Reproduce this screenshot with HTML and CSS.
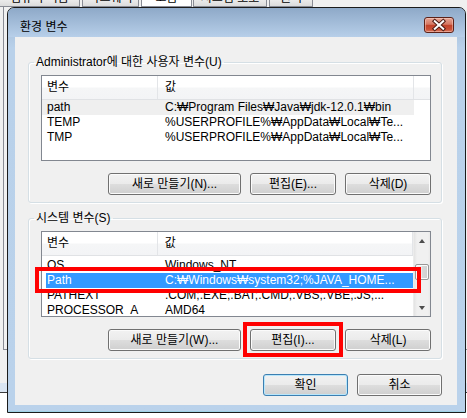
FILE: index.html
```html
<!DOCTYPE html>
<html lang="ko">
<head>
<meta charset="utf-8">
<title>환경 변수</title>
<link rel="stylesheet" href="styles.css">
</head>
<body>
<div class="parent">
  <div class="tabs">
    <div class="tab t1"><span>컴퓨터 이름</span></div>
    <div class="tab t2"><span>하드웨어</span></div>
    <div class="tab t3 sel"><span>고급</span></div>
    <div class="tab t4"><span>시스템 보호</span></div>
    <div class="tab t5"><span>원격</span></div>
  </div>
  <div class="page"></div>
</div>

<div class="dialog">
  <div class="titlebar">
    <span class="title">환경 변수</span>
    <button class="close" aria-label="닫기">
      <svg width="30" height="16" viewBox="0 0 30 16">
        <path d="M10.8 4.2 L19.2 11.8 M19.2 4.2 L10.8 11.8" stroke="#4a1a12" stroke-width="4" stroke-linecap="square" fill="none"/>
        <path d="M10.8 4.2 L19.2 11.8 M19.2 4.2 L10.8 11.8" stroke="#ffffff" stroke-width="2" stroke-linecap="square" fill="none"/>
      </svg>
    </button>
  </div>

  <div class="client">
    <fieldset class="group">
      <legend>Administrator에 대한 사용자 변수(U)</legend>
      <div class="list">
        <div class="lmain">
          <div class="lhead"><span class="h1">변수</span><span class="h2">값</span><span class="h3"></span></div>
          <div class="lbody">
            <div class="row hot"><span class="c1">path</span><span class="c2">C:₩Program Files₩Java₩jdk-12.0.1₩bin</span></div>
            <div class="row"><span class="c1">TEMP</span><span class="c2">%USERPROFILE%₩AppData₩Local₩Te...</span></div>
            <div class="row"><span class="c1">TMP</span><span class="c2">%USERPROFILE%₩AppData₩Local₩Te...</span></div>
          </div>
        </div>
      </div>
      <div class="btnrow">
        <button class="btn wide">새로 만들기(N)...</button>
        <button class="btn">편집(E)...</button>
        <button class="btn">삭제(D)</button>
      </div>
    </fieldset>

    <fieldset class="group g2">
      <legend>시스템 변수(S)</legend>
      <div class="list">
        <div class="lmain">
          <div class="lhead cover"><span class="h1">변수</span><span class="h2">값</span></div>
          <div class="lbody scrolled">
            <div class="row"><span class="c1">OS</span><span class="c2">Windows_NT</span></div>
            <div class="row sel"><span class="c1">Path</span><span class="c2">C:₩Windows₩system32;%JAVA_HOME...</span></div>
            <div class="row"><span class="c1">PATHEXT</span><span class="c2">.COM;.EXE;.BAT;.CMD;.VBS;.VBE;.JS;...</span></div>
            <div class="row"><span class="c1">PROCESSOR_A</span><span class="c2">AMD64</span></div>
          </div>
        </div>
        <div class="vscroll">
          <div class="sbtn"><span class="arrow up"></span></div>
          <div class="track"><div class="thumb"></div></div>
          <div class="sbtn"><span class="arrow down"></span></div>
        </div>
        <div class="mark-row"></div>
      </div>
      <div class="btnrow">
        <button class="btn wide">새로 만들기(W)...</button>
        <button class="btn marked">편집(I)...</button>
        <button class="btn">삭제(L)</button>
      </div>
    </fieldset>

    <div class="footer">
      <button class="btn ok">확인</button>
      <button class="btn">취소</button>
    </div>
  </div>
</div>
</body>
</html>
```

FILE: styles.css
```css
* { box-sizing: border-box; }

html, body {
  margin: 0;
  padding: 0;
}

body {
  width: 467px;
  height: 418px;
  overflow: hidden;
  position: relative;
  background: #ffffff;
  font-family: "Liberation Sans", "Noto Sans CJK KR", sans-serif;
  font-size: 12px;
  color: #000;
}

/* underlying parent window (System Properties) */
.parent {
  position: absolute;
  left: 0;
  top: 0;
  width: 467px;
  height: 393px;
  background: #f0f0f0;
  border-bottom: 1px solid #3c3c3c;
  box-shadow: inset 0 -9px 0 #dae5f2;
  overflow: hidden;
}

.tabs {
  display: flex;
  height: 7px;
}

.tab {
  height: 7px;
  overflow: hidden;
  border: 1px solid #898c95;
  border-top: none;
  background: linear-gradient(#ebebeb, #dcdcdc);
  margin-right: 2px;
  font-size: 12px;
  color: #000;
  text-align: center;
}

.tab span {
  display: block;
  line-height: 14px;
  margin-top: -9px;
  white-space: nowrap;
}

.t1 { width: 80px; border-left: none; }
.t2 { width: 57px; }
.t3 { width: 51px; margin-right: 1px; }
.t4 { width: 74px; }
.t5 { width: 44px; }
.tab.sel { background: #fff; }

.page {
  position: absolute;
  left: 3px;
  top: 7px;
  width: 464px;
  height: 343px;
  border-left: 1px solid #898c95;
  border-bottom: 1px solid #898c95;
}

/* the dialog window */
.dialog {
  position: absolute;
  left: 7px;
  top: 7px;
  width: 459px;
  height: 406px;
  border: 1px solid #1b1b1b;
  border-radius: 7px 7px 0 0;
  background: linear-gradient(#9ab3cf 0px, #b9d1ea 40px, #bad2eb 100%);
  display: flex;
  flex-direction: column;
  box-shadow: inset 0 -1px 0 #9fd0e4;
}

.titlebar {
  height: 29px;
  display: flex;
  justify-content: space-between;
  align-items: flex-start;
  padding: 0 11px 0 12px;
  border-radius: 6px 6px 0 0;
  background: linear-gradient(#8ea9c8, #b7cfe9);
}

.title {
  padding-top: 12px;
  line-height: 15px;
  font-size: 12px;
  color: #000;
  white-space: nowrap;
}

.close {
  margin-top: 9px;
  width: 30px;
  height: 16px;
  padding: 0;
  border: 1px solid #5d2218;
  border-radius: 3px;
  background: linear-gradient(#e5a595 0%, #d67863 45%, #c2432b 52%, #c94f36 80%, #d97a5f 100%);
  box-shadow: inset 0 0 0 1px rgba(255, 220, 210, 0.45);
  display: flex;
  align-items: center;
  justify-content: center;
}

.close svg { display: block; margin: -1px; }

.client {
  flex: 1;
  margin: 0 8px 7px 7px;
  background: #f0f0f0;
  display: flex;
  flex-direction: column;
}

/* group boxes */
.group {
  width: 414px;
  margin: 18px 0 0 13px;
  padding: 5px 10px 7px 12px;
  border: 1px solid #d5dfe5;
  border-radius: 3px;
  box-shadow: inset 1px 1px 0 #fff, 1px 1px 0 #fff;
  min-width: 0;
}

.group.g2 { margin-top: 8px; }

.group legend {
  padding: 0 2px;
  margin-left: -7px;
  line-height: 15px;
  font-size: 12px;
  white-space: nowrap;
}

/* list views */
.list {
  position: relative;
  height: 86px;
  border: 1px solid #828790;
  background: #fff;
  display: flex;
}

.lmain {
  flex: 1;
  display: flex;
  flex-direction: column;
  overflow: hidden;
  min-width: 0;
}

.lhead {
  display: flex;
  height: 24px;
  flex: none;
  border-bottom: 1px solid #e0e2e5;
  background: linear-gradient(#ffffff 0, #ffffff 11px, #f5f6f7 12px, #f3f4f6 100%);
  position: relative;
  z-index: 1;
}

.lhead.cover { box-shadow: 0 4px 0 #fff; }

.lhead span {
  line-height: 23px;
  white-space: nowrap;
}

.h1 {
  width: 116px;
  padding-left: 5px;
  border-right: 1px solid #e3e5e8;
}

.h2 {
  width: 256px;
  padding-left: 7px;
  border-right: 1px solid #e3e5e8;
}

.h3 { flex: 1; }

.lbody {
  flex: 1;
  overflow: hidden;
}

.lbody.scrolled { padding-top: 2px; }

.row {
  display: flex;
  width: 372px;
  height: 15px;
  line-height: 15px;
  white-space: nowrap;
}

.row span { overflow: hidden; }

.c1 {
  width: 116px;
  padding-left: 5px;
}

.c2 {
  width: 256px;
  padding-left: 7px;
}

.row.hot { background: #efefef; }

.row.sel {
  background: linear-gradient(to right, transparent 4px, #3399ff 4px);
  color: #fff;
}

/* scrollbar */
.vscroll {
  width: 17px;
  flex: none;
  display: flex;
  flex-direction: column;
  background: linear-gradient(to right, #e3e3e3 0, #f0f0f0 3px, #f0f0f0 14px, #e9e9e9 100%);
  border-left: 1px solid #ececec;
}

.sbtn {
  height: 17px;
  flex: none;
  display: flex;
  align-items: center;
  justify-content: center;
}

.arrow {
  width: 0;
  height: 0;
  border-left: 3.5px solid transparent;
  border-right: 3.5px solid transparent;
}

.arrow.up { border-bottom: 4px solid #4d4d4d; }
.arrow.down { border-top: 4px solid #4d4d4d; }

.track {
  flex: 1;
  padding-top: 15px;
}

.thumb {
  margin: 0 1px;
  height: 16px;
  border: 1px solid #979797;
  border-radius: 2px;
  background: linear-gradient(to right, #f3f3f3, #e8e8e8 50%, #d8d8d8 51%, #cfcfcf);
  box-shadow: inset 0 0 0 1px #fafafa;
}

/* red annotation boxes */
.mark-row {
  position: absolute;
  left: -7px;
  top: 35px;
  width: 386px;
  height: 26px;
  border: 4px solid #ff0000;
  pointer-events: none;
  z-index: 2;
}

/* buttons */
.btnrow {
  display: flex;
  justify-content: flex-end;
  gap: 9px;
  margin-top: 12px;
}

.btn {
  width: 86px;
  height: 22px;
  padding: 0;
  border: 1px solid #707070;
  border-radius: 3px;
  background: linear-gradient(#f2f2f2 0%, #ebebeb 48%, #dddddd 52%, #cfcfcf 100%);
  box-shadow: inset 0 0 0 1px #fbfbfb;
  font-family: "Liberation Sans", "Noto Sans CJK KR", sans-serif;
  font-size: 12px;
  line-height: 18px;
  color: #000;
  white-space: nowrap;
}

.btn.wide { width: 133px; }

.btn.marked { position: relative; }

.btn.marked::after {
  content: "";
  position: absolute;
  left: -8px;
  top: -8px;
  right: -8px;
  bottom: -7px;
  border: 4px solid #ff0000;
  pointer-events: none;
}

.footer {
  display: flex;
  justify-content: flex-end;
  gap: 9px;
  margin-top: 15px;
  width: 427px;
}

.footer .btn { width: 85px; }

.btn.ok {
  border-color: #3c7fb1;
  box-shadow: inset 0 0 0 1px #b8e6fb;
}
```
